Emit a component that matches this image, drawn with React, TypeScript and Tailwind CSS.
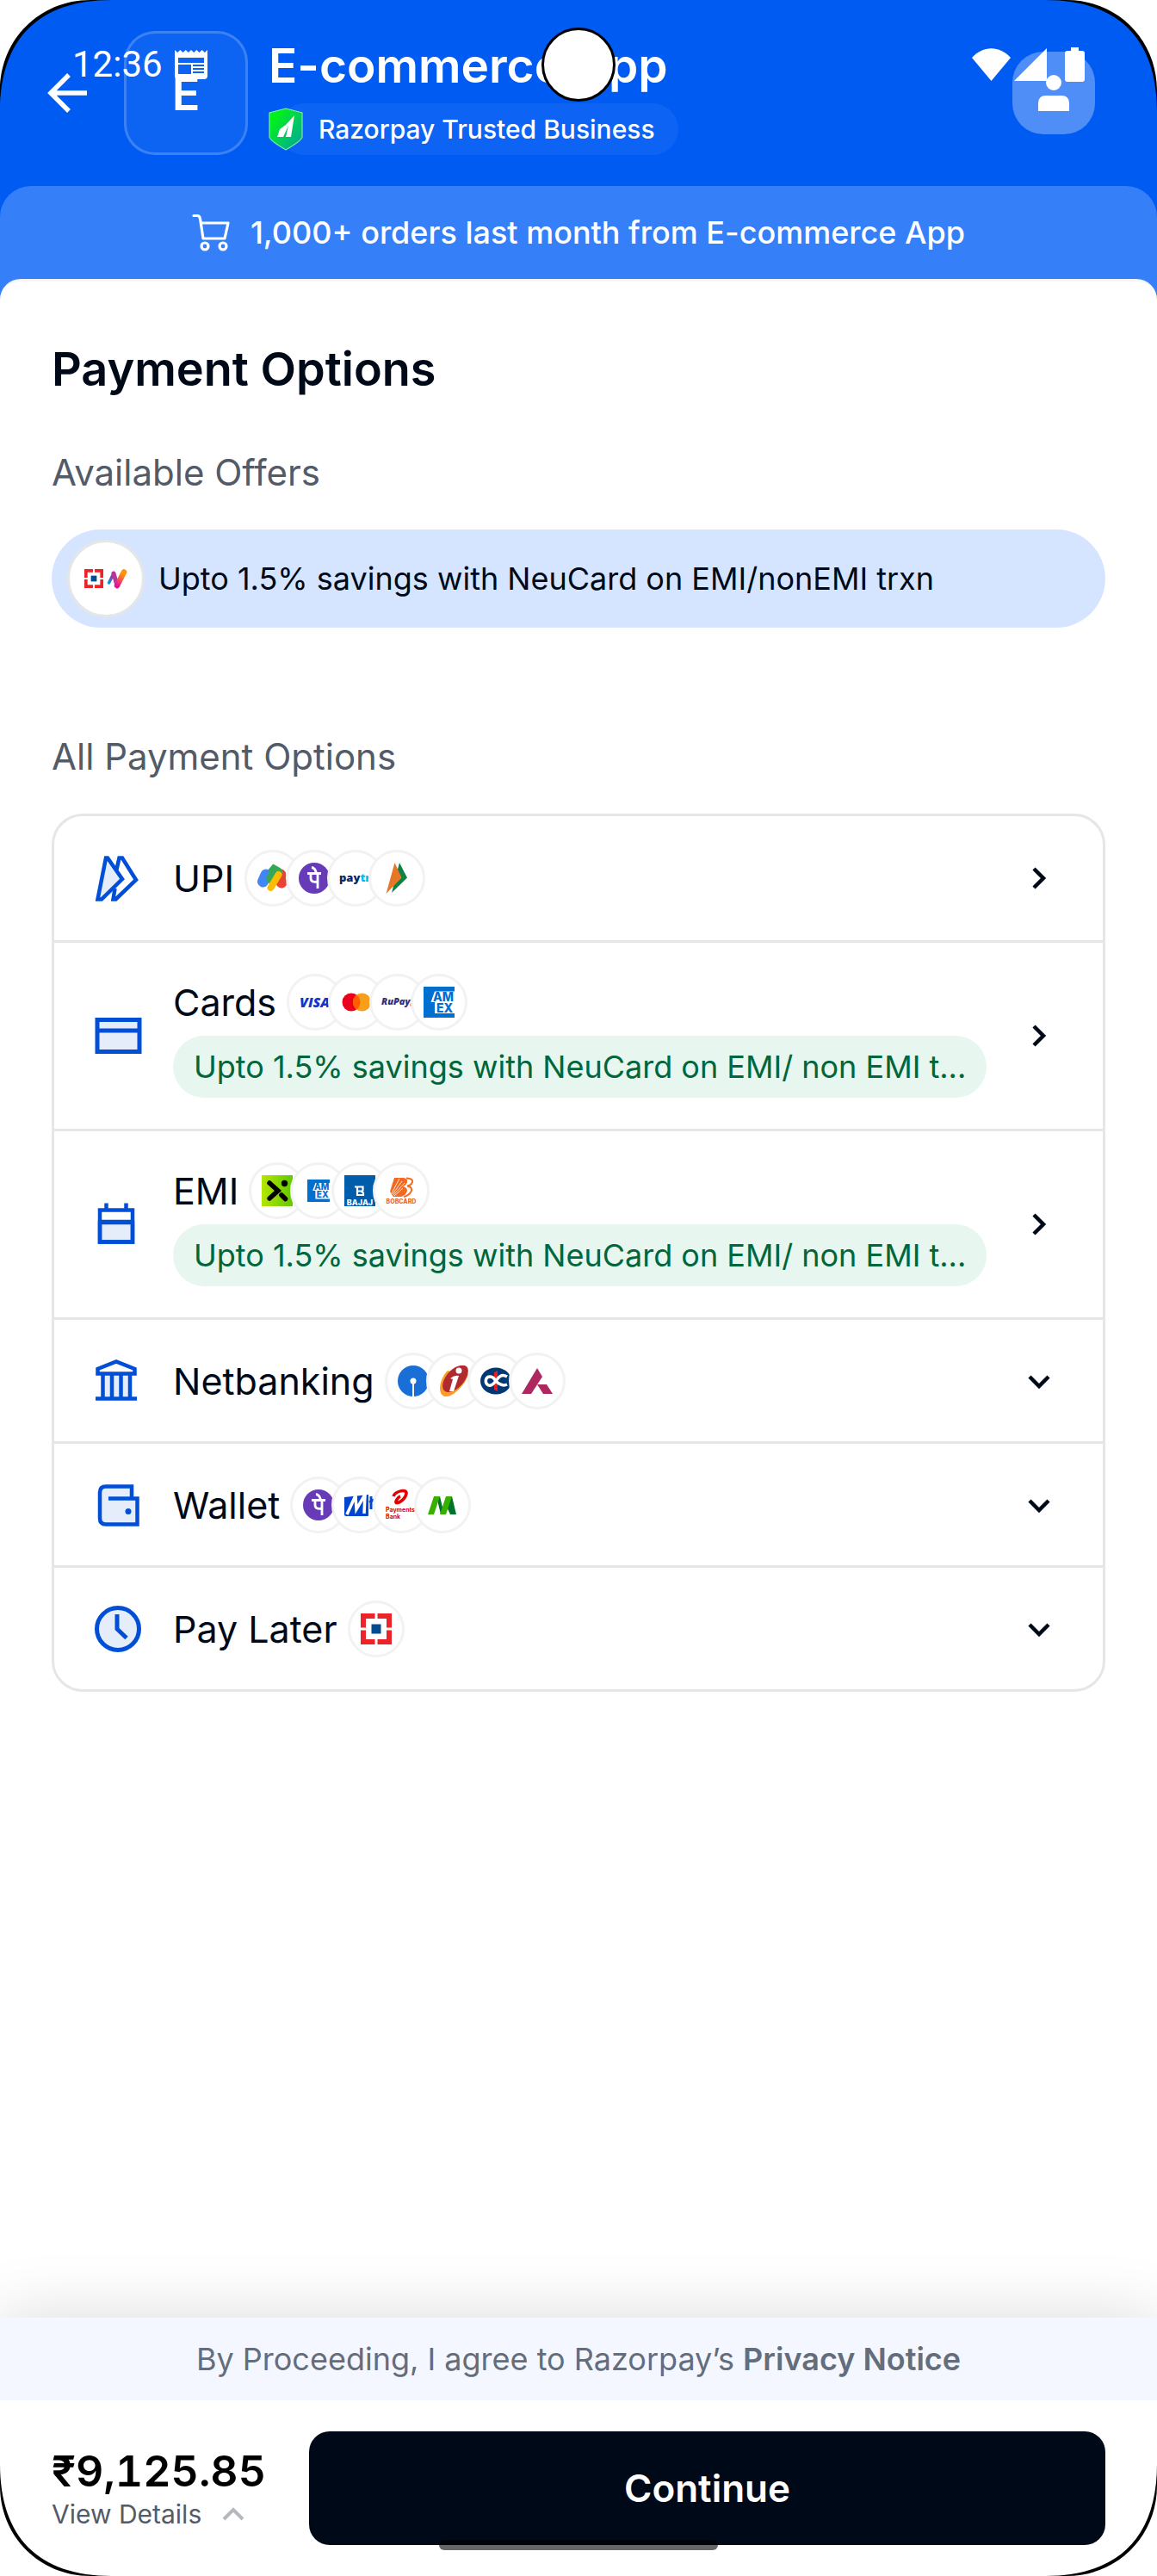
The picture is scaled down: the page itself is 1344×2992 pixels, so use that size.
import type { ReactNode } from 'react';

/* ---------- Device overlays ---------- */

function Corner({ className }: { className: string }) {
  return (
    <svg aria-hidden="true" viewBox="0 0 132 132" className={`pointer-events-none absolute z-30 size-[132px] ${className}`}>
      <path d="M0 130C0 45 45 0 130 0H0Z" fill="#000" />
      <path d="M0 105C0 46 46 0 105 0H0Z" fill="#fff" />
    </svg>
  );
}

function StatusBar() {
  return (
    <div className="pointer-events-none absolute inset-x-0 top-0 z-20 flex h-[150px] items-center justify-between px-[84px] text-white">
      <div className="flex items-center gap-[14px]">
        <span className="font-[Roboto,sans-serif] text-[42px] leading-none">12:36</span>
        <svg aria-hidden="true" viewBox="0 0 38 34" className="h-[34px] w-[38px]">
          <path
            fill="currentColor"
            fillRule="evenodd"
            d="M0 0l3.2 3L6.400 0l3.200 3L12.700 0l3.200 3L19 0l3.200 3L25.300 0l3.200 3L31.700 0l3.200 3L38 0v30a4 4 0 0 1-4 4H4a4 4 0 0 1-4-4ZM4 9v6h30V9Zm0 8v11h15V17Zm17 0v2h13v-2Zm0 4v2h13v-2Zm0 4v2h13v-2Z"
          />
        </svg>
      </div>
      <div className="flex items-center gap-1">
        <svg aria-hidden="true" viewBox="0 0 45 38" className="h-[38px] w-[45px]">
          <path fill="currentColor" d="M22.500 38L0 11C13-3.500 32-3.500 45 11Z" />
        </svg>
        <svg aria-hidden="true" viewBox="0 0 38 38" className="size-[38px]">
          <path fill="currentColor" d="M38 0v38H0Z" />
        </svg>
        <svg aria-hidden="true" viewBox="0 0 40 40" className="h-10 w-10">
          <path fill="currentColor" d="M24 0h9v4h4q3 0 3 3v30q0 3-3 3H20q-3 0-3-3V7q0-3 3-3h4Z" />
        </svg>
      </div>
    </div>
  );
}

/* ---------- Method icons ---------- */

const BLUE = '#004FD6';
const TINT = '#E5EDFA';

function UpiIcon() {
  return (
    <svg aria-hidden="true" viewBox="0 0 72 72" className="size-[72px]" stroke={BLUE} strokeWidth="4.500" fill="none">
      <path d="M36 28L39.500 12.500H43L59 38L35.500 60.500H32.500L34.500 48" />
      <path d="M14.500 60.500L24 12.500H26L43 37L19 60.500Z" fill={TINT} />
    </svg>
  );
}

function CardIcon() {
  return (
    <svg aria-hidden="true" viewBox="0 0 72 72" className="size-[72px]" stroke={BLUE} strokeWidth="5">
      <path d="M14 17.500H63V54.500H14Z" fill={TINT} />
      <path d="M12 30H65" />
    </svg>
  );
}

function CalendarIcon() {
  return (
    <svg aria-hidden="true" viewBox="0 0 72 72" className="size-[72px]" stroke={BLUE} strokeWidth="4.500" fill="none">
      <path d="M17 34V56.500H55V34Z" fill={TINT} />
      <path d="M17 19.500H55V56.500H17ZM15 33H57M24.500 19V11.500M47.500 19V11.500" />
    </svg>
  );
}

function BankIcon() {
  return (
    <svg aria-hidden="true" viewBox="0 0 72 72" className="size-[72px]" stroke={BLUE} strokeWidth="4.500" fill="none">
      <path d="M19 27H53V57H19Z" fill={TINT} stroke="none" />
      <path d="M14.500 27.500V22L36 13.500L57.500 22V27.500ZM12 56.500H60M20.500 28V56M31 28V56M41.500 28V56M52 28V56" />
    </svg>
  );
}

function WalletIcon() {
  return (
    <svg aria-hidden="true" viewBox="0 0 72 72" className="size-[72px]" stroke={BLUE} strokeWidth="4.500" fill="none">
      <path d="M54 27V14.500H24Q17 14.500 17 21.500V51.500Q17 58.500 24 58.500H60.500V28.500H27" fill={TINT} />
      <circle cx="50" cy="43.500" r="3.500" fill={BLUE} stroke="none" />
    </svg>
  );
}

function ClockIcon() {
  return (
    <svg aria-hidden="true" viewBox="0 0 72 72" className="size-[72px]" stroke={BLUE} strokeWidth="5" fill="none">
      <circle cx="38" cy="36" r="24.500" fill={TINT} />
      <path d="M37 19V36L48 46.500" />
    </svg>
  );
}

/* ---------- Brand marks, all on a 36-unit grid ---------- */

const mark = 'size-9 shrink-0';

function GPay() {
  return (
    <svg viewBox="0 0 36 36" className={mark} fill="none" strokeLinecap="round" strokeWidth="11">
      <path d="M27 14L28 23" stroke="#EA4335" strokeWidth="13" />
      <path d="M13 16L19.500 8.500L24 11" stroke="#34A853" />
      <path d="M6.500 22L10 14" stroke="#4285F4" strokeWidth="13" />
      <path d="M15 19L20 9" stroke="#34A853" strokeWidth="10" />
      <path d="M15.500 29L24.500 14" stroke="#FBBC04" strokeWidth="8" />
    </svg>
  );
}

function PhonePe() {
  return (
    <svg viewBox="0 0 36 36" className={mark} fill="none" stroke="#fff" strokeWidth="2.800">
      <circle cx="18" cy="18" r="18" fill="#673AB7" stroke="none" />
      <path d="M10 12.500H26M15 5.500Q19 6 20.500 12M14 13V18Q14 23.500 22 22M22 12V30" />
    </svg>
  );
}

function Paytm() {
  return (
    <svg viewBox="0 0 36 36" className={`${mark} overflow-visible`} fontFamily="Open Sans, sans-serif" fontSize="13" fontWeight="800">
      <text x="-1" y="22" fill="#00296D">
        pay<tspan fill="#00BAF2">tm</tspan>
      </text>
    </svg>
  );
}

function Bhim() {
  return (
    <svg viewBox="0 0 36 36" className={mark}>
      <path d="M21 0L30 17.500L12 35Z" fill="#0E8043" />
      <path d="M15.500 0L23.500 17.500L5.500 36Z" fill="#E97626" />
    </svg>
  );
}

function Visa() {
  return (
    <svg viewBox="0 0 36 36" className={`${mark} overflow-visible`}>
      <text x="0" y="24" fontFamily="Open Sans, sans-serif" fontStyle="italic" fontSize="16" fontWeight="800" fill="#1434CB">
        VISA
      </text>
    </svg>
  );
}

function Mastercard() {
  return (
    <svg viewBox="0 0 36 36" className={mark}>
      <circle cx="12" cy="18" r="10.500" fill="#EB001B" />
      <circle cx="24.500" cy="18" r="10.500" fill="#F79E1B" />
      <path d="M18.200 9.500a10.500 10.500 0 0 1 0 17a10.500 10.500 0 0 1 0-17" fill="#FF5F00" />
    </svg>
  );
}

function RuPay() {
  return (
    <svg viewBox="0 0 36 36" className={`${mark} overflow-visible`}>
      <text x="-1" y="21" fontFamily="Open Sans, sans-serif" fontStyle="italic" fontSize="11" fontWeight="800" fill="#302F7A">
        RuPay
      </text>
      <path d="M34 13L38 18L32 23Z" fill="#F26522" />
    </svg>
  );
}

function Amex({ className = mark }: { className?: string }) {
  return (
    <svg viewBox="0 0 36 36" className={className}>
      <path d="M0 0H36V36H0Z" fill="#016FD0" />
      <path d="M13 5.500H36V18H38V31H13V18H8.500Z" fill="#fff" />
      <g fontFamily="Inter, sans-serif" fontSize="14" fontWeight="800" fill="#016FD0">
        <text x="11" y="17">AM</text>
        <text x="15" y="29.500">EX</text>
      </g>
    </svg>
  );
}

function SmallAmex() {
  return (
    <span className="flex size-9 items-center justify-center">
      <Amex className="size-[26px]" />
    </span>
  );
}

function Xcard() {
  return (
    <svg viewBox="0 0 36 36" className={mark}>
      <defs>
        <linearGradient id="lime" x1="0" x2="1">
          <stop stopColor="#B4E600" />
          <stop offset="1" stopColor="#62C800" />
        </linearGradient>
      </defs>
      <path d="M0 0H36V36H0Z" fill="url(#lime)" />
      <path d="M9 9L19 18L9 27" fill="none" stroke="#000" strokeWidth="5.500" strokeLinecap="round" />
      <circle cx="26.500" cy="9.500" r="3.700" />
      <path d="M23 23L27.500 27.500" stroke="#000" strokeWidth="5.500" strokeLinecap="round" />
    </svg>
  );
}

function Bajaj() {
  return (
    <svg viewBox="0 0 36 36" className={mark}>
      <path d="M0 0H36V36H0Z" fill="#005DAC" />
      <path d="M12 13.500H21.500V17.500L20 19L22 20.500V23H16M15 13.500V24M16 18.500H20" fill="none" stroke="#fff" strokeWidth="2.200" />
      <text x="18" y="34.500" textAnchor="middle" fontFamily="Inter, sans-serif" fontSize="9" fontWeight="800" fill="#fff">
        BAJAJ
      </text>
    </svg>
  );
}

function Bobcard() {
  return (
    <svg viewBox="0 0 36 36" className={`${mark} overflow-visible`}>
      <path d="M10 3H21Q26 4 25 8Q24 12 20 13Q25 14 25 18Q24 23 18 25H9L5 19Z" fill="#F26A22" />
      <path d="M24 3.500Q34 4 30 10Q28 12 25 12.500Q32 14 29.500 19Q27 23.500 21 25" fill="none" stroke="#F26A22" strokeWidth="2" />
      <path d="M7 21L16 4M8 22L19 7M9 23L22 9M10 24L20 15" stroke="#fff" strokeWidth="0.800" />
      <text x="18" y="33" textAnchor="middle" fontFamily="Inter, sans-serif" fontSize="7" fontWeight="800" fill="#F26A22">
        BOBCARD
      </text>
    </svg>
  );
}

function Sbi() {
  return (
    <svg viewBox="0 0 36 36" className={mark}>
      <circle cx="18" cy="18" r="18" fill="#1A6FD6" />
      <circle cx="18" cy="18" r="3.500" fill="#fff" />
      <path d="M18 18V36" stroke="#fff" strokeWidth="2" />
    </svg>
  );
}

function Icici() {
  return (
    <svg viewBox="0 0 36 36" className={mark}>
      <path d="M10 6C-1 17-2 36 8 36C17 36 31 22 34 10Z" fill="#F99D27" />
      <path d="M25 0C36-2 36 9 29 19C22 29 9 35 5 28C1 20 12 2 25 0Z" fill="#B02A30" />
      <circle cx="23" cy="6" r="3.500" fill="#fff" />
      <path d="M13 15Q18 11 23 12L17 30H12L16 16Z" fill="#fff" />
    </svg>
  );
}

function Kotak() {
  return (
    <svg viewBox="0 0 36 36" className={mark}>
      <ellipse cx="18" cy="18" rx="18" ry="15.500" fill="#003874" />
      <path d="M16 8L20 6V30L16 28Z" fill="#ED1C24" />
      <path
        d="M31 13C24 9 21 14 18 18S11 25 8 22S6 13 11 13S16 16 18 18S25 25 31 22"
        fill="none"
        stroke="#fff"
        strokeWidth="3.500"
      />
    </svg>
  );
}

function Axis() {
  return (
    <svg viewBox="0 0 36 36" className={mark} fill="#AE275F">
      <path d="M18 3L24 13L11 33H0Z" />
      <path d="M18 22H29L36 33H25Z" />
    </svg>
  );
}

function Mobikwik() {
  return (
    <svg viewBox="0 0 36 36" className={mark}>
      <path d="M0 9L28 6V30Q28 31 27 31H2Q0 31 0 29Z" fill="#0045CF" />
      <path d="M31 8V23M29 15L36 11" stroke="#0045CF" strokeWidth="3" />
      <path d="M3 29L13 7L14 23L24 6L23 28" fill="none" stroke="#fff" strokeWidth="3.500" />
    </svg>
  );
}

function Airtel() {
  return (
    <svg viewBox="0 0 36 36" className={`${mark} overflow-visible`}>
      <path d="M9 8C11 2 24-1 24 4C24 9 18 15 13 15.500C10 15.500 14 9 17 8" fill="none" stroke="#E40000" strokeWidth="3.600" />
      <g fontFamily="Inter, sans-serif" fontSize="7" fontWeight="700" fill="#E40000">
        <text x="0" y="26">Payments</text>
        <text x="0" y="34">Bank</text>
      </g>
    </svg>
  );
}

function Mobile() {
  return (
    <svg viewBox="0 0 36 36" className={mark}>
      <path d="M11 8H15L20 29H16ZM26 8H29L34 29H27L22 18Z" fill="#00732B" />
      <path d="M8 8H15L8 29H1ZM22 8H29L22 29H15Z" fill="#38B000" />
    </svg>
  );
}

function Hdfc({ className = mark }: { className?: string }) {
  return (
    <svg viewBox="0 0 36 36" className={className}>
      <path d="M0 0H36V36H0Z" fill="#ED232A" />
      <path d="M6 6H30V30H6ZM16.500 0H19.500V36H16.500ZM0 16.500H36V19.500H0Z" fill="#fff" />
      <path d="M12.500 12.500H23.500V23.500H12.500Z" fill="#004C8F" />
    </svg>
  );
}

function NeuMark() {
  return (
    <svg aria-hidden="true" viewBox="0 0 24 24" className="size-6" fill="none" strokeLinecap="round">
      <defs>
        <linearGradient id="neuA" x1="0" y1="1" x2="1" y2="0">
          <stop stopColor="#009BE5" />
          <stop offset="0.600" stopColor="#8A3FA0" />
        </linearGradient>
        <linearGradient id="neuB" x1="0" y1="1" x2="0.300" y2="0">
          <stop stopColor="#E6109B" />
          <stop offset="1" stopColor="#FF9408" />
        </linearGradient>
      </defs>
      <path d="M2.500 17L8 6" stroke="url(#neuA)" strokeWidth="3.500" />
      <path d="M8 6L12 20" stroke="#B5359B" strokeWidth="5" />
      <path d="M12 20L20 4.500" stroke="url(#neuB)" strokeWidth="6.500" />
    </svg>
  );
}

/* ---------- List rows ---------- */

const OFFER = 'Upto 1.5% savings with NeuCard on EMI/ non EMI t...';

type Method = { name: string; icon: ReactNode; logos: ReactNode[]; offer?: string; opens: 'page' | 'inline' };

const methods: Method[] = [
  { name: 'UPI', icon: <UpiIcon />, logos: [<GPay />, <PhonePe />, <Paytm />, <Bhim />], opens: 'page' },
  { name: 'Cards', icon: <CardIcon />, logos: [<Visa />, <Mastercard />, <RuPay />, <Amex />], offer: OFFER, opens: 'page' },
  { name: 'EMI', icon: <CalendarIcon />, logos: [<Xcard />, <SmallAmex />, <Bajaj />, <Bobcard />], offer: OFFER, opens: 'page' },
  { name: 'Netbanking', icon: <BankIcon />, logos: [<Sbi />, <Icici />, <Kotak />, <Axis />], opens: 'inline' },
  { name: 'Wallet', icon: <WalletIcon />, logos: [<PhonePe />, <Mobikwik />, <Airtel />, <Mobile />], opens: 'inline' },
  { name: 'Pay Later', icon: <ClockIcon />, logos: [<Hdfc />], opens: 'inline' },
];

function Chevron({ opens }: { opens: Method['opens'] }) {
  return (
    <svg aria-hidden="true" viewBox="0 0 48 48" className="size-12 shrink-0" fill="none" stroke="#000918" strokeWidth="4.500">
      <path d={opens === 'page' ? 'M18 13L29 24L18 35' : 'M13 19L24 30L35 19'} />
    </svg>
  );
}

function MethodRow({ method }: { method: Method }) {
  return (
    <li>
      <button
        type="button"
        className={`flex min-h-[141px] w-full items-center pr-[50px] pl-9 text-left ${method.opens === 'page' ? 'py-9' : 'py-[34px]'}`}
      >
        <span className="mr-[30px] shrink-0">{method.icon}</span>
        <span className="flex min-w-0 flex-1 flex-col items-start gap-1.5">
          <span className="flex items-center gap-3">
            <span className="text-[43px] leading-[60px] text-[#000918]">{method.name}</span>
            <span className="flex">
              {method.logos.map((logo, i) => (
                <span
                  key={i}
                  className="-mr-[18px] flex size-[66px] items-center justify-center rounded-full border-3 border-[#f2f2f2] bg-white"
                >
                  {logo}
                </span>
              ))}
            </span>
          </span>
          {method.offer && (
            <span className="max-w-full truncate rounded-full bg-[#E7F6EF] px-6 text-[36px] leading-[72px] text-[#00663B]">
              {method.offer}
            </span>
          )}
        </span>
        <span className="ml-[34px] flex">
          <Chevron opens={method.opens} />
        </span>
      </button>
    </li>
  );
}

export default function App() {
  return (
    <div className="relative flex min-h-screen flex-col overflow-hidden bg-[#3580F9] font-[Inter,sans-serif]">
      <StatusBar />
      <div className="absolute top-8 left-1/2 z-30 size-[86px] -translate-x-1/2 rounded-full border-3 border-black bg-white" />
      <Corner className="top-0 left-0" />
      <Corner className="top-0 right-0 -scale-x-100" />
      <Corner className="bottom-0 left-0 -scale-y-100" />
      <Corner className="right-0 bottom-0 -scale-100" />

      <div className="bg-[#005BF2]">
        <header className="flex items-center py-9 pr-[72px] pl-[42px] text-white">
          <button type="button" aria-label="Back" className="mr-[30px] shrink-0">
            <svg viewBox="0 0 72 72" className="size-[72px]" fill="none" stroke="currentColor" strokeWidth="5.500">
              <path d="M59 36H17M38 15L17 36L38 57" />
            </svg>
          </button>
          <div className="flex size-[144px] shrink-0 items-center justify-center rounded-[36px] border-3 border-white/20 bg-white/5 text-[54px] font-semibold">
            E
          </div>
          <div className="ml-6 flex h-[144px] flex-col justify-between">
            <h1 className="text-[55px] leading-[80px] font-semibold">E-commerce App</h1>
            <div className="ml-3 flex h-[60px] items-center gap-[18px] self-start rounded-full bg-white/5 pr-[27px] text-[30px] font-medium">
              <svg aria-hidden="true" viewBox="0 0 40 50" className="-ml-3 h-[50px] w-10">
                <defs>
                  <linearGradient id="shield" x1="0" y1="0" x2="1" y2="1">
                    <stop offset="0.200" stopColor="#00F01C" />
                    <stop offset="1" stopColor="#00A0A8" />
                  </linearGradient>
                </defs>
                <path d="M20 1L39 6V34Q39 38 20 49Q1 38 1 34V6Z" fill="url(#shield)" stroke="#7FE9A0" strokeWidth="1.200" />
                <path d="M30 9L26 34H20L23 21L17 34H10L13 25L20 20Z" fill="#fff" />
              </svg>
              Razorpay Trusted Business
            </div>
          </div>
          <button type="button" aria-label="Account" className="ml-auto flex size-24 shrink-0 items-center justify-center rounded-[36px] bg-[#4F8DF7]">
            <svg viewBox="0 0 36 42" className="h-[42px] w-9" fill="currentColor">
              <circle cx="18" cy="9" r="9" />
              <path d="M0 42V33Q0 24 9 24H27Q36 24 36 33V42Z" />
            </svg>
          </button>
        </header>
        <div className="flex h-[108px] items-center justify-center gap-6 rounded-t-[36px] bg-[#3580F9] text-[36px] font-medium text-white">
          <svg aria-hidden="true" viewBox="0 0 44 44" className="size-11" fill="none" stroke="currentColor" strokeWidth="3.200" strokeLinecap="round" strokeLinejoin="round">
            <path d="M2 2.500H6Q9 2.500 9.500 6L13 29H38L42 11H11" />
            <circle cx="15" cy="38" r="4" />
            <circle cx="36" cy="38" r="4" />
          </svg>
          1,000+ orders last month from E-commerce App
        </div>
      </div>

      <main className="flex flex-1 flex-col rounded-t-3xl border-t-3 border-[#f5f5f5] bg-white">
        <div className="flex flex-col px-[60px] pt-[66px]">
          <h2 className="text-[54px] leading-[72px] font-semibold text-[#000918]">Payment Options</h2>
          <h3 className="mt-[54px] text-[42px] leading-[60px] text-[#525B67]">Available Offers</h3>
          <div className="mt-9 flex h-[114px] items-center gap-4 rounded-full bg-[#D6E5FF] px-[18px] text-[36px] text-[#000918]">
            <span className="flex size-[90px] shrink-0 items-center justify-center gap-1 rounded-full border-3 border-[#E5E6E7] bg-white">
              <Hdfc className="size-[22px]" />
              <NeuMark />
            </span>
            Upto 1.5% savings with NeuCard on EMI/nonEMI trxn
          </div>
          <h3 className="mt-[120px] text-[42px] leading-[60px] text-[#525B67]">All Payment Options</h3>
          <ul className="mt-9 divide-y-3 divide-[#E5E6E7] rounded-[36px] border-3 border-[#E5E6E7]">
            {methods.map((m) => (
              <MethodRow key={m.name} method={m} />
            ))}
          </ul>
        </div>

        <footer className="relative mt-auto shadow-[0_0_72px_rgba(0,0,0,0.150)]">
          <p className="bg-[#F4F7FF] text-center text-[36px] leading-[96px] text-[#646D7B]">
            By Proceeding, I agree to Razorpay’s{' '}
            <a href="#privacy" className="font-semibold">
              Privacy Notice
            </a>
          </p>
          <div className="flex items-center gap-[50px] bg-white px-[60px] py-9">
            <div className="shrink-0">
              <div className="text-[50px] leading-[60px] font-semibold text-black tabular-nums">₹9,125.85</div>
              <button type="button" className="flex items-center gap-6 text-[30px] leading-10 text-[#525B67]">
                View Details
                <svg aria-hidden="true" viewBox="0 0 26 16" className="h-4 w-[26px]" fill="none" stroke="#B5B8BE" strokeWidth="4">
                  <path d="M2 14L13 3L24 14" />
                </svg>
              </button>
            </div>
            <button type="button" className="h-[132px] flex-1 rounded-3xl bg-[#000918] text-[44px] font-semibold text-white">
              Continue
            </button>
          </div>
          <div className="absolute bottom-[30px] left-1/2 h-3 w-[324px] -translate-x-1/2 rounded-full bg-black/60" />
        </footer>
      </main>
    </div>
  );
}
